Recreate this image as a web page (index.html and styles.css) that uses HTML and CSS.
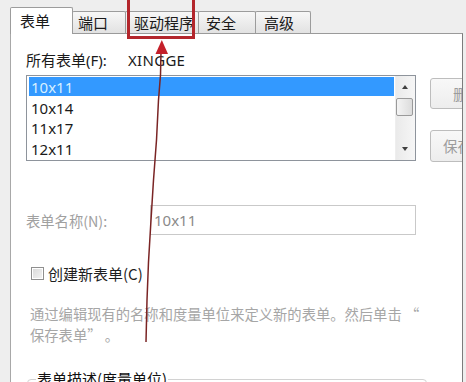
FILE: index.html
```html
<!DOCTYPE html>
<html lang="zh-CN">
<head>
<meta charset="utf-8">
<title>打印服务器属性</title>
<link rel="stylesheet" href="styles.css">
</head>
<body>
<div class="window">
  <div class="tabs">
    <div class="tab active t1">表单</div>
    <div class="tab t2">端口</div>
    <div class="tab t3">驱动程序</div>
    <div class="tab t4">安全</div>
    <div class="tab t5">高级</div>
  </div>
  <div class="panel">
    <div class="row-label">
      <span class="lbl-all">所有表单(F):</span>
      <span class="server">XINGGE</span>
    </div>
    <div class="list-row">
      <div class="listbox">
        <div class="items">
          <div class="item selected">10x11</div>
          <div class="item">10x14</div>
          <div class="item">11x17</div>
          <div class="item">12x11</div>
        </div>
        <div class="scrollbar">
          <div class="sb-arrow up"></div>
          <div class="sb-thumb"></div>
          <div class="sb-track"></div>
          <div class="sb-arrow down"></div>
        </div>
      </div>
      <div class="buttons">
        <div class="btn btn-del">删除(D)</div>
        <div class="btn btn-save">保存表单(S)</div>
      </div>
    </div>
    <div class="name-row">
      <span class="name-lbl">表单名称(N):</span>
      <div class="name-input">10x11</div>
    </div>
    <div class="check-row">
      <span class="checkbox"></span>
      <span class="check-lbl">创建新表单(C)</span>
    </div>
    <p class="desc">通过编辑现有的名称和度量单位来定义新的表单。然后单击 “<br>保存表单” 。</p>
    <fieldset class="group">
      <legend>表单描述(度量单位)</legend>
    </fieldset>
  </div>
  <svg class="overlay" width="466" height="382" viewBox="0 0 466 382">
    <rect x="128.5" y="-3" width="65" height="40.5" fill="none" stroke="#b3262c" stroke-width="3"/>
    <polyline points="161,52 160.5,75 158.5,100 156.5,140 153.5,180 151,220 148.5,262 147,300 146,342" fill="none" stroke="#7a2424" stroke-width="1.5"/>
    <polygon points="161.8,40 155.5,54 168,54" fill="#c4202a"/>
  </svg>
</div>
</body>
</html>
```

FILE: styles.css
```css
* { box-sizing: border-box; }
html, body { margin: 0; padding: 0; }
body {
  background: #eeeeee;
  font-family: "Noto Sans", "Noto Sans CJK SC", sans-serif;
  color: #1a1a1a;
}
.window {
  width: 466px;
  height: 382px;
  overflow: hidden;
  position: relative;
  background: #eeeeee;
}
.tabs {
  display: flex;
  align-items: flex-end;
  height: 33px;
  padding-left: 10px;
}
.tab {
  height: 22px;
  border: 1px solid #9c9c9c;
  border-bottom: none;
  background: linear-gradient(#f7f7f7, #e2e2e2);
  font-family: "Noto Sans CJK SC", sans-serif;
  font-size: 15px;
  line-height: 21px;
  color: #1a1a1a;
  margin-left: -1px;
  border-radius: 2px 2px 0 0;
}
.tab.active {
  height: 26px;
  line-height: 25px;
  background: #ffffff;
  margin-left: 0;
  margin-bottom: -1px;
  position: relative;
  z-index: 1;
  height: 27px;
}
.t1 { width: 63px; padding-left: 9px; }
.t2 { width: 54px; padding-left: 5px; }
.t3 { width: 74px; padding-left: 8px; }
.t4 { width: 58px; padding-left: 7px; }
.t5 { width: 56px; padding-left: 8px; }
.panel {
  margin-left: 10px;
  width: 453px;
  height: 349px;
  background: #ffffff;
  border: 1px solid #9a9a9a;
  border-left-color: #a8a8a8;
  border-right-color: #7c7c7c;
  border-bottom: none;
  overflow: hidden;
  padding-left: 15px;
}
.row-label {
  display: flex;
  margin-top: 16px;
  height: 20px;
  line-height: 20px;
  font-size: 15px;
}
.lbl-all { width: 102px; }
.server { letter-spacing: 0.3px; }
.list-row {
  display: flex;
  margin-top: 5px;
}
.listbox {
  width: 390px;
  height: 86px;
  border: 1px solid #8e949c;
  display: flex;
  flex: none;
}
.items {
  flex: 1;
  padding: 1px 1px 0 2px;
}
.item {
  height: 20.6px;
  line-height: 20px;
  font-size: 15px;
  padding-left: 2px;
}
.item.selected {
  background: #3399ff;
  color: #d8f0ff;
  height: 19px;
  margin-bottom: 1.6px;
}
.scrollbar {
  width: 20px;
  display: flex;
  flex-direction: column;
  background: linear-gradient(90deg, #eaeaea, #f6f6f6);
  border-left: 1px solid #eeeeee;
}
.sb-arrow {
  height: 22px;
  position: relative;
}
.sb-arrow::after {
  content: "";
  position: absolute;
  left: 6px;
  width: 0;
  height: 0;
  border-left: 3.5px solid transparent;
  border-right: 3.5px solid transparent;
}
.sb-arrow.up::after { top: 9px; border-bottom: 4px solid #404040; }
.sb-arrow.down::after { top: 9px; border-top: 4px solid #404040; }
.sb-thumb {
  height: 18px;
  width: 17px;
  margin-left: 0;
  border: 1px solid #9a9a9a;
  border-radius: 2px;
  background: linear-gradient(90deg, #f4f4f4, #dcdcdc);
}
.sb-track { flex: 1; }
.buttons {
  margin-left: 14px;
  display: flex;
  flex-direction: column;
  padding-top: 3px;
  flex: none;
}
.btn {
  width: 80px;
  border: 1px solid #bdbdbd;
  border-radius: 3px;
  background: linear-gradient(#f8f8f8, #ededed);
  color: #9c9c9c;
  font-family: "Noto Sans CJK SC", sans-serif;
  font-size: 14.5px;
  white-space: nowrap;
}
.btn-del { height: 31px; line-height: 29px; padding-left: 22px; }
.btn-save { height: 32px; line-height: 30px; padding-left: 12px; margin-top: 21px; }
.name-row {
  display: flex;
  align-items: center;
  margin-top: 43px;
  height: 30px;
}
.name-lbl {
  width: 124px;
  font-size: 14.3px;
  color: #a0a0a0;
  font-family: "Noto Sans CJK SC", sans-serif;
}
.name-lbl, .desc, .check-lbl, legend { font-family: "Noto Sans CJK SC", sans-serif; }
.name-input {
  width: 266px;
  height: 30px;
  border: 1px solid #c9c9c9;
  font-size: 15px;
  line-height: 28px;
  color: #8a8a8a;
  padding-left: 3px;
}
.check-row {
  display: flex;
  align-items: center;
  margin-top: 31px;
  height: 14px;
}
.checkbox {
  width: 13px;
  height: 13px;
  margin-left: 5px;
  border: 1px solid #8f8f8f;
  background: linear-gradient(135deg, #d8d8d8, #f4f4f4);
  box-shadow: inset 0 0 0 1px #ffffff;
}
.check-lbl {
  margin-left: 4px;
  font-size: 15px;
  color: #1e1e1e;
}
.desc {
  margin: 23px 0 0 4px;
  font-size: 14.3px;
  line-height: 21px;
  color: #a6a6a6;
  white-space: nowrap;
}
.group {
  margin: 24px 0 0 1px;
  padding: 0 0 0 8px;
  width: 400px;
  height: 60px;
  border: 1px solid #d2d2d2;
  border-radius: 4px;
}
.group legend {
  padding: 0 1px;
  font-size: 15px;
  line-height: 20px;
  color: #111111;
}
.overlay {
  position: absolute;
  left: 0;
  top: 0;
  pointer-events: none;
}
```
